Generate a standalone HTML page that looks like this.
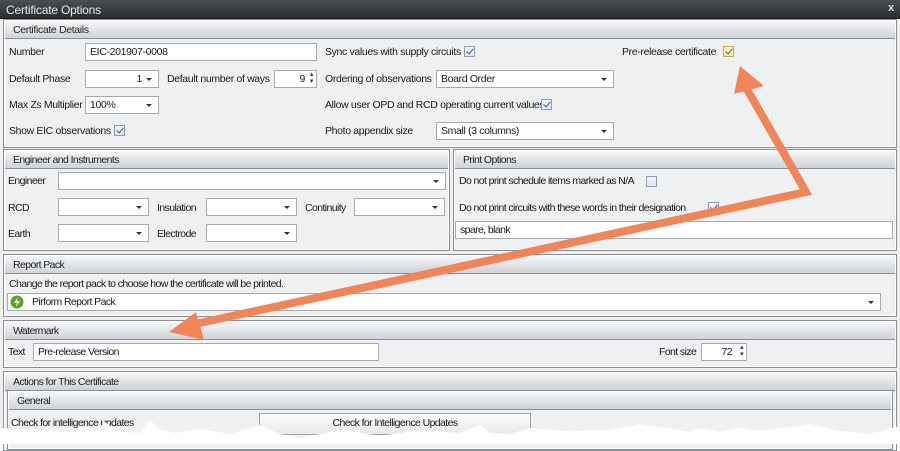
<!DOCTYPE html>
<html><head><meta charset="utf-8"><style>
*{box-sizing:border-box;margin:0;padding:0}
body{width:900px;height:444px;overflow:hidden;background:#fff;font-family:"Liberation Sans",sans-serif;font-size:10.5px;color:#1a1a1a;letter-spacing:-0.35px}
#win{position:absolute;left:0;top:0;width:900px;height:444px;background:#eef0f2}
.title{position:absolute;left:0;top:0;width:900px;height:19px;background:linear-gradient(#4a4e55,#2a2d31);color:#e8e8e8;font-size:12px;padding:3px 6px;border-bottom:1px solid #1c1c1c;letter-spacing:-0.2px}
.title .x{position:absolute;right:6px;top:2px;font-size:11px;font-weight:bold;color:#ddd}
.grp{position:absolute;border:1px solid #8a8d92;background:#eef0f2;box-shadow:inset 0 0 0 1px #fff}
.hd{position:absolute;left:1px;right:1px;top:1px;height:18px;background:linear-gradient(#f6f7f8,#dfe2e6 55%,#cfd3d8);border-bottom:1px solid #8a8d92;padding:3px 8px;color:#222}
.l{position:absolute;white-space:nowrap}
.n{letter-spacing:-0.6px}
.in{position:absolute;background:#fff;border:1px solid #a7abb0;height:18px;padding:2px 4px;white-space:nowrap;overflow:hidden}
.dd::after{content:"";position:absolute;right:6px;top:7px;border-left:3px solid transparent;border-right:3px solid transparent;border-top:3px solid #333}
.sp::after{content:"\25B4\A\25BE";white-space:pre;position:absolute;right:3px;top:0px;font-size:7px;line-height:7px;color:#333}
.cb{position:absolute;width:11px;height:11px;border:1px solid #8d9db8;background:linear-gradient(#f4f6fa,#dfe6f0)}
.cb.c::after{content:"";position:absolute;left:3px;top:0px;width:3px;height:6px;border:solid #3a57a0;border-width:0 1.5px 1.5px 0;transform:rotate(40deg)}
.cb.y{background:#fbf0b4;border-color:#c8a84c}
.r{text-align:right;padding-right:16px}
.btn{position:absolute;border:1px solid #a0a4a8;background:linear-gradient(#fdfdfd,#e6e8ea);text-align:center;padding-top:3px}
</style></head><body>
<div id="win">
<div class="title">Certificate Options<span class="x">x</span></div>

<div class="grp" style="left:3px;top:19px;width:894px;height:129px"><div class="hd">Certificate Details</div></div>
<div class="l" style="left:9px;top:46px">Number</div>
<div class="in" style="left:85px;top:43px;width:232px">EIC-201907-0008</div>
<div class="l" style="left:325px;top:46px">Sync values with supply circuits</div>
<div class="cb c" style="left:464px;top:46px"></div>
<div class="l" style="left:622px;top:46px">Pre-release certificate</div>
<div class="cb y c" style="left:723px;top:46px"></div>
<div class="l" style="left:9px;top:73px">Default Phase</div>
<div class="in dd r" style="left:85px;top:70px;width:74px">1</div>
<div class="l" style="left:167px;top:73px">Default number of ways</div>
<div class="in sp r" style="left:274px;top:70px;width:43px;padding-right:11px">9</div>
<div class="l" style="left:325px;top:73px">Ordering of observations</div>
<div class="in dd" style="left:436px;top:70px;width:178px">Board Order</div>
<div class="l" style="left:9px;top:99px">Max Zs Multiplier</div>
<div class="in dd" style="left:85px;top:96px;width:74px">100%</div>
<div class="l" style="left:325px;top:99px">Allow user OPD and RCD operating current values</div>
<div class="cb c" style="left:541px;top:99px"></div>
<div class="l" style="left:9px;top:125px">Show EIC observations</div>
<div class="cb c" style="left:114px;top:125px"></div>
<div class="l" style="left:325px;top:125px">Photo appendix size</div>
<div class="in dd" style="left:436px;top:122px;width:178px">Small (3 columns)</div>

<div class="n">
<div class="grp" style="left:3px;top:149px;width:447px;height:102px"><div class="hd">Engineer and Instruments</div></div>
<div class="l" style="left:8px;top:175px">Engineer</div>
<div class="in dd" style="left:58px;top:172px;width:388px"></div>
<div class="l" style="left:8px;top:202px">RCD</div>
<div class="in dd" style="left:58px;top:198px;width:91px"></div>
<div class="l" style="left:157px;top:202px">Insulation</div>
<div class="in dd" style="left:206px;top:198px;width:91px"></div>
<div class="l" style="left:305px;top:202px">Continuity</div>
<div class="in dd" style="left:354px;top:198px;width:91px"></div>
<div class="l" style="left:8px;top:228px">Earth</div>
<div class="in dd" style="left:58px;top:224px;width:91px"></div>
<div class="l" style="left:157px;top:228px">Electrode</div>
<div class="in dd" style="left:206px;top:224px;width:91px"></div>

<div class="grp" style="left:453px;top:149px;width:444px;height:102px"><div class="hd">Print Options</div></div>
<div class="l" style="left:459px;top:175px">Do not print schedule items marked as N/A</div>
<div class="cb" style="left:646px;top:176px"></div>
<div class="l" style="left:459px;top:202px">Do not print circuits with these words in their designation</div>
<div class="cb c" style="left:708px;top:202px"></div>
<div class="in" style="left:455px;top:221px;width:438px">spare, blank</div>

<div class="grp" style="left:3px;top:254px;width:894px;height:63px"><div class="hd">Report Pack</div></div>
<div class="l" style="left:9px;top:278px">Change the report pack to choose how the certificate will be printed.</div>
<div class="in dd" style="left:7px;top:293px;width:874px;padding-left:24px">Pirform Report Pack</div>
<svg style="position:absolute;left:10px;top:295px" width="14" height="14"><circle cx="7" cy="7" r="6.5" fill="#5aa02c"/><path d="M8 2 L4 8 H7 L6 12 L10 6 H7 Z" fill="#fff"/></svg>

<div class="grp" style="left:3px;top:320px;width:894px;height:48px"><div class="hd">Watermark</div></div>
<div class="l" style="left:8px;top:346px">Text</div>
<div class="in" style="left:33px;top:343px;width:346px">Pre-release Version</div>
<div class="l" style="left:659px;top:346px">Font size</div>
<div class="in sp r" style="left:701px;top:343px;width:46px;padding-right:14px">72</div>

<div class="grp" style="left:3px;top:371px;width:894px;height:80px"><div class="hd">Actions for This Certificate</div></div>
<div class="grp" style="left:7px;top:390px;width:886px;height:60px"><div class="hd">General</div></div>
<div class="l" style="left:11px;top:417px">Check for intelligence updates</div>
<div class="btn" style="left:259px;top:413px;width:272px;height:22px">Check for Intelligence Updates</div>
</div>

<svg style="position:absolute;left:0;top:0" width="900" height="444">
<path d="M0 444 L0 428 L40 430 L70 432 L85 426 L95 432 L105 422 L115 431 L140 433 L150 420 L160 430 L175 433 L200 429 L230 434 L260 425 L280 434 L300 438 L330 432 L350 431 L380 436 L420 430 L460 433 L480 425 L490 433 L510 434 L530 428 L560 431 L610 430 L640 424 L660 427 L690 432 L700 428 L720 432 L740 427 L755 431 L790 427 L810 424 L840 431 L870 434 L900 426 L900 444 Z" fill="#fff"/>
<g fill="none" stroke="#f0855a" stroke-width="8" stroke-linejoin="miter">
<polyline points="744,84 806,192 186,326"/>
</g>
<polygon points="740,66 764,86 734,94" fill="#f0855a"/>
<polygon points="169,332 196,312 204,340" fill="#f0855a"/>
</svg>
</div>
</body></html>
